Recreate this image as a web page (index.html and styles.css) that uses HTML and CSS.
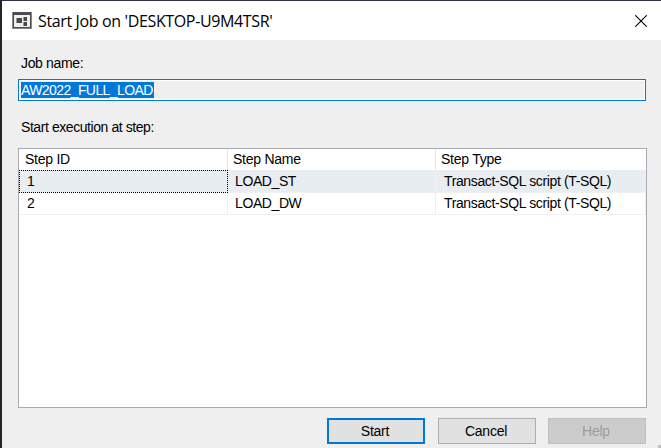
FILE: index.html
```html
<!DOCTYPE html>
<html lang="en">
<head>
<meta charset="utf-8">
<title>Start Job</title>
<link rel="stylesheet" href="styles.css">
</head>
<body>
<main class="dialog">
  <header class="titlebar">
    <svg class="app-icon" width="20" height="17" viewBox="0 0 20 17" shape-rendering="crispEdges">
      <path fill="#888" d="M0 0h20v17H0z"/>
      <path fill="#4c4c4c" d="M1 0h18v3H1zM1 3h1v13H1zM18 3h1v13h-1zM1 15h18v1H1z"/>
      <path fill="#f0f0f0" d="M2 3h16v12H2z"/>
      <path fill="#484848" d="M5 6h5v5H5zM12 5h3v4h-3zM12 10h3v4h-3z"/>
      <path fill="#999" d="M4 6h1v5H4zM11 5h1v4h-1zM11 10h1v4h-1z"/>
    </svg>
    <h1 class="title">Start Job on 'DESKTOP-U9M4TSR'</h1>
    <svg class="close" width="12" height="12" viewBox="0 0 12 12"><path d="M.3.3l11.4 11.4M11.7.3L.3 11.7" stroke="#000" stroke-width="1.1"/></svg>
  </header>
  <section class="content">
    <div class="label job-label">Job name:</div>
    <div class="field"><span class="selected">AW2022_FULL_LOAD</span></div>
    <div class="label step-label">Start execution at step:</div>
    <div class="list">
      <div class="row head"><div>Step ID</div><div>Step Name</div><div>Step Type</div></div>
      <div class="row current"><div class="focus">1</div><div>LOAD_ST</div><div class="script">Transact-SQL script (T-SQL)</div></div>
      <div class="row"><div>2</div><div>LOAD_DW</div><div class="script">Transact-SQL script (T-SQL)</div></div>
    </div>
    <footer class="buttons">
      <div class="button primary">Start</div>
      <div class="button">Cancel</div>
      <div class="button disabled">Help</div>
    </footer>
  </section>
  <i class="grip"></i>
</main>
</body>
</html>
```

FILE: styles.css
```css
* { box-sizing: border-box; }
body { margin: 0; width: 661px; height: 448px; overflow: hidden; background: #2b2b37; font: 14px/16px "Liberation Sans", Arial, sans-serif; letter-spacing: -0.4px; color: #000; }
.dialog { position: relative; height: 448px; padding-top: 1px; background: #efefef; border-left: 2px solid #252529; box-shadow: inset 0 1px #303040; }
.titlebar { height: 39px; background: #fff; display: flex; align-items: center; padding: 0 14px 0 10px; }
.app-icon { flex: none; margin-top: 0; }
.title { margin: 0 auto 0 6px; font: 16px/20px "Open Sans", sans-serif; letter-spacing: -0.36px; white-space: nowrap; }
.close { flex: none; }
.content { padding: 15px 14px 0 16px; }
.label { padding-left: 3px; height: 16px; line-height: 17px; }
.job-label { letter-spacing: -0.35px; }
.field { margin-top: 8px; width: 628px; height: 22px; border: 1px solid #0078d7; box-shadow: inset 0 0 0 1px #fff; padding: 2px; }
.selected { display: block; width: 133px; height: 16px; background: #0078d7; color: #fff; white-space: nowrap; letter-spacing: -0.58px; line-height: 17px; }
.step-label { margin-top: 18px; letter-spacing: -0.43px; line-height: 17px; }
.list { margin-top: 13px; width: 629px; height: 260px; border: 1px solid #a9aab0; background: #fff; }
.row { display: grid; grid-template-columns: 209px 208px 210px; height: 22px; line-height: 21px; border-bottom: 1px solid #f0f0f0; white-space: nowrap; }
.row > div { padding-left: 7px; border-right: 1px solid #efefef; }
.row > div:first-child { padding-left: 8px; }
.row > div:last-child { padding-left: 8px; }
.row.head { height: 21px; border: 0; letter-spacing: -0.25px; }
.row.head > div { padding-left: 5px; border-color: #e5e5e5; }
.row.head > div:first-child { padding-left: 6px; }
.row.head > div:last-child { border: 0; }
.row > .script { letter-spacing: -0.37px; }
.row.current { height: 23px; line-height: 23px; background: #e8edf1; }
.row.current > .focus { height: 23px; padding-left: 7px; border: 1px dotted #000; line-height: 21px; }
.buttons { display: flex; padding: 10px 0 0 309px; gap: 12px; }
.button { flex: 0 0 98px; height: 26px; border: 1px solid #adadad; background: #e1e1e1; text-align: center; line-height: 25px; letter-spacing: -0.25px; padding-right: 2px; }
.primary { border: 2px solid #0078d7; line-height: 23px; margin-right: 1px; }
.disabled { background: #ccc; border-color: #bfbfbf; color: #9c9c9c; }
.grip { position: absolute; right: 0; bottom: 0; width: 3px; height: 3px; background: #bfbfbf; }
```
